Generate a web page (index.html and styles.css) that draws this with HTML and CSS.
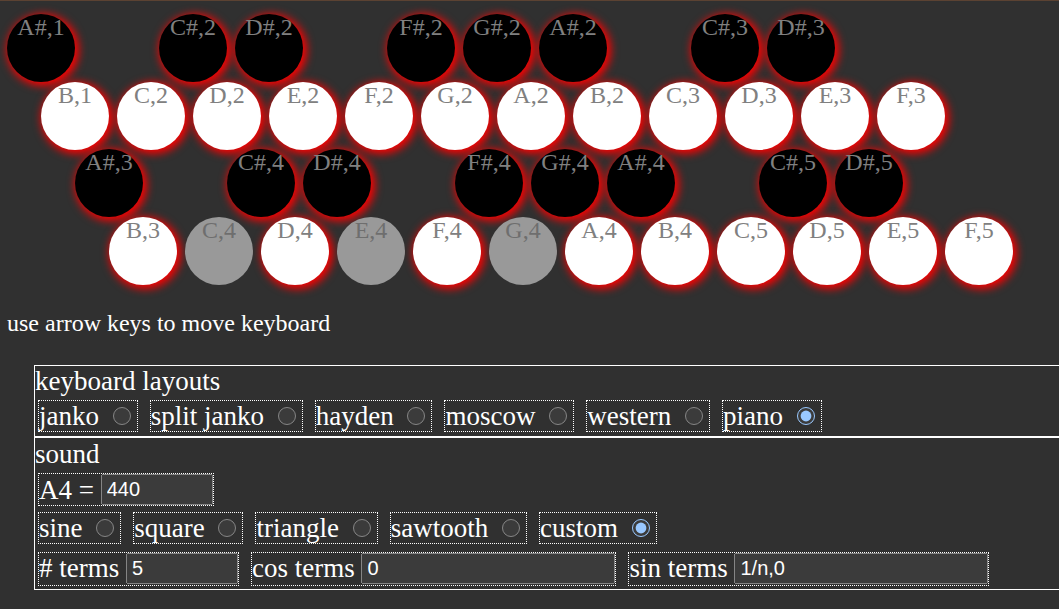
FILE: index.html
```html
<!DOCTYPE html>
<html lang="en">

<head>
    <meta charset="UTF-8">
    <meta name="viewport" content="width=device-width, initial-scale=1.0">
    <title>keyboard</title>
    <link rel="stylesheet" href="styles.css">
</head>

<body>
    <div class="keyboard">
        <div class="key-row row-1">
            <div class="key black">A#,1</div>
            <div class="key empty"></div>
            <div class="key black">C#,2</div>
            <div class="key black">D#,2</div>
            <div class="key empty"></div>
            <div class="key black">F#,2</div>
            <div class="key black">G#,2</div>
            <div class="key black">A#,2</div>
            <div class="key empty"></div>
            <div class="key black">C#,3</div>
            <div class="key black">D#,3</div>
        </div>
        <div class="key-row row-2">
            <div class="key white">B,1</div>
            <div class="key white">C,2</div>
            <div class="key white">D,2</div>
            <div class="key white">E,2</div>
            <div class="key white">F,2</div>
            <div class="key white">G,2</div>
            <div class="key white">A,2</div>
            <div class="key white">B,2</div>
            <div class="key white">C,3</div>
            <div class="key white">D,3</div>
            <div class="key white">E,3</div>
            <div class="key white">F,3</div>
        </div>
        <div class="key-row row-3">
            <div class="key black">A#,3</div>
            <div class="key empty"></div>
            <div class="key black">C#,4</div>
            <div class="key black">D#,4</div>
            <div class="key empty"></div>
            <div class="key black">F#,4</div>
            <div class="key black">G#,4</div>
            <div class="key black">A#,4</div>
            <div class="key empty"></div>
            <div class="key black">C#,5</div>
            <div class="key black">D#,5</div>
        </div>
        <div class="key-row row-4">
            <div class="key white">B,3</div>
            <div class="key pressed">C,4</div>
            <div class="key white">D,4</div>
            <div class="key pressed">E,4</div>
            <div class="key white">F,4</div>
            <div class="key pressed">G,4</div>
            <div class="key white">A,4</div>
            <div class="key white">B,4</div>
            <div class="key white">C,5</div>
            <div class="key white">D,5</div>
            <div class="key white">E,5</div>
            <div class="key white">F,5</div>
        </div>
    </div>

    <p class="help">use arrow keys to move keyboard</p>

    <!-- 键盘布局 -->
    <div class="panel layouts">
        <div class="panel-title">keyboard layouts</div>
        <div class="panel-row">
            <label class="option">janko <input type="radio" name="layout"></label>
            <label class="option">split janko <input type="radio" name="layout"></label>
            <label class="option">hayden <input type="radio" name="layout"></label>
            <label class="option">moscow <input type="radio" name="layout"></label>
            <label class="option">western <input type="radio" name="layout"></label>
            <label class="option">piano <input type="radio" name="layout" checked></label>
        </div>
    </div>

    <!-- 声音 -->
    <div class="panel sound">
        <div class="panel-title">sound</div>
        <div class="panel-row">
            <label class="field">A4 = <input type="text" class="num-input" value="440"></label>
        </div>
        <div class="panel-row">
            <label class="option">sine <input type="radio" name="wave"></label>
            <label class="option">square <input type="radio" name="wave"></label>
            <label class="option">triangle <input type="radio" name="wave"></label>
            <label class="option">sawtooth <input type="radio" name="wave"></label>
            <label class="option">custom <input type="radio" name="wave" checked></label>
        </div>
        <div class="panel-row terms-row">
            <label class="field"># terms <input type="text" class="num-input" value="5"></label>
            <label class="field">cos terms <input type="text" class="terms-input" value="0"></label>
            <label class="field">sin terms <input type="text" class="terms-input" value="1/n,0"></label>
        </div>
    </div>
</body>

</html>
```

FILE: styles.css
```css
/* 页面基础 */

html {
    color-scheme: dark;
    background: #303030;
    border-top: 1px solid #5b4232;
}

body {
    margin: 0px;
    padding: 13px 0px 0px 7px;
    overflow: hidden;
    font-family: "Liberation Serif", "Times New Roman", serif;
    font-size: 24px;
    color: #fff;
}

/* 键盘 */

.key-row {
    display: flex;
    gap: 8px;
    height: 67.5px;
}

.row-2 {
    padding-left: 34px;
}

.row-3 {
    padding-left: 68px;
}

.row-4 {
    padding-left: 102px;
}

.key {
    flex: none;
    width: 68px;
    height: 68px;
    border-radius: 50%;
    text-align: center;
    color: #808080;
    box-shadow: 2px 2px 8px 2px #f00;
}

.key.black {
    background: #000;
}

.key.white {
    background: #fff;
}

.key.pressed {
    background: #999;
    color: #6e6e6e;
    box-shadow: none;
}

.key.empty {
    visibility: hidden;
}

.help {
    margin: 26px 0px 28px 0px;
    line-height: 27px;
}

/* 设置面板 */

.panel {
    margin: 0px -40px 0px 27px;
    border: 1px solid #fff;
    font-size: 27px;
}

.layouts {
    padding-bottom: 1px;
}

.sound {
    padding-top: 1px;
}

.panel-title {
    line-height: 30px;
}

.panel-row {
    display: flex;
    gap: 6px;
    padding: 3px 0px;
}

.layouts .panel-row {
    padding-top: 4px;
}

.terms-row {
    padding-top: 5px;
}

.option,
.field {
    display: flex;
    align-items: center;
    box-sizing: border-box;
    border: 1px dotted #fff;
    margin: 0px 3px;
    line-height: 30px;
    white-space: pre;
}

.option {
    height: 32px;
}

.option input {
    width: 18px;
    height: 18px;
    margin: 0px 6px 0px 7px;
}

.field {
    height: 33px;
}

.sound .panel-row:nth-child(2) {
    padding-top: 4px;
}

.terms-row .field {
    height: 34px;
    align-items: flex-start;
}

.field input {
    box-sizing: border-box;
    height: 31px;
    margin: 0px;
    padding: 0px 4px;
    font-family: "Liberation Sans", Arial, sans-serif;
    font-size: 20px;
}

.num-input {
    width: 112px;
}

.terms-input {
    width: 254px;
}
```
